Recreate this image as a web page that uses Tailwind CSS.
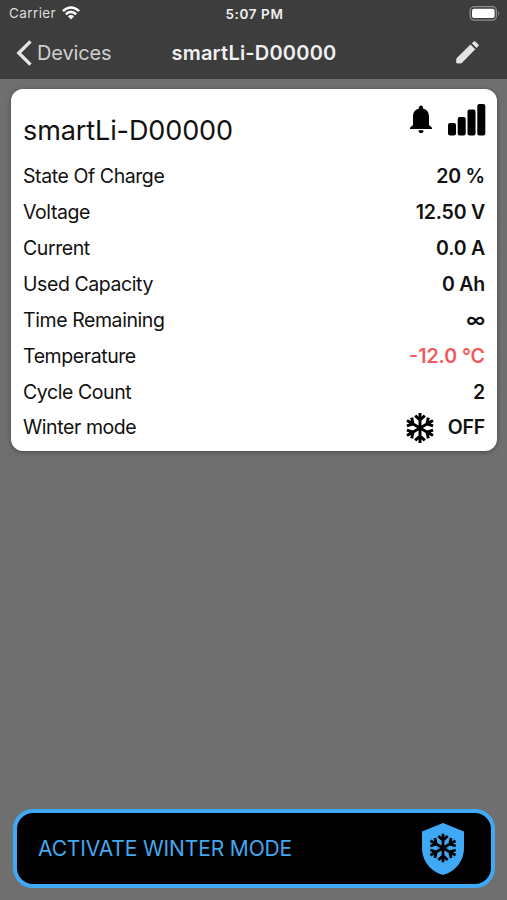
<!DOCTYPE html>
<html lang="en">
<head>
<meta charset="utf-8">
<title>smartLi-D00000</title>
<script src="https://cdn.jsdelivr.net/npm/@tailwindcss/browser@4"></script>
</head>
<body class="flex h-[900px] w-[507px] flex-col overflow-hidden bg-[#6f6f6f] font-['Inter','Liberation_Sans',sans-serif] text-[#111]">
<svg class="hidden">
  <symbol id="flake" viewBox="-15 -15 30 30">
    <g fill="none" stroke="#000" stroke-width="2.9">
      <g id="axis"><path d="M0-15V15M-4.800-12.400L0-8L4.800-12.400M-4.800 12.400L0 8L4.800 12.400"/></g>
      <use href="#axis" transform="rotate(60)"/>
      <use href="#axis" transform="rotate(120)"/>
    </g>
  </symbol>
</svg>
<header class="h-[79px] shrink-0 bg-[#3d3d3d] text-[#f0f0f0]">
  <div class="grid h-[28px] grid-cols-3 items-center pr-[7px] pl-[9px] text-[13.5px] leading-none">
    <div class="flex items-center gap-[6px] text-[#dcdcdc]"><span class="tracking-[0.4px]">Carrier</span>
      <svg class="mb-[2px] h-[14px] w-[18px]" viewBox="0 0 18 14" fill="none" stroke="#fff" stroke-width="2.5"><path d="M.9 5.2Q9-2.2 17.1 5.2M3.8 8.2Q9 3.6 14.2 8.2"/><path d="M5.9 10.3Q9 7.8 12.1 10.3L9 13.6Z" fill="#fff" stroke="none"/></svg>
    </div>
    <div class="pt-[1px] text-center font-semibold tracking-[0.6px] whitespace-nowrap">5:07 PM</div>
    <svg class="mb-[1px] h-[15px] w-[31px] justify-self-end" viewBox="0 0 31 15"><rect x="1.2" y=".7" width="26.2" height="13.4" rx="4" fill="none" stroke="#8d8d8d" stroke-width="1.3"/><rect x="3" y="2.7" width="22.6" height="9.4" rx="2" fill="#fff"/><path d="M29 5Q31 7.4 29 9.8Z" fill="#8d8d8d"/></svg>
  </div>
  <div class="grid h-[49px] grid-cols-[155.500px_1fr_60px] items-center pr-[27px] pl-[16px]">
    <div class="flex items-center gap-[5px] text-[20px] text-[#cfcfcf]">
      <svg class="h-[26px] w-[16px]" viewBox="0 0 16 26" fill="none" stroke="#e4e4e2" stroke-width="3.4"><path d="M14.5 1.4L2.8 13L14.5 24.6"/></svg>
      <span class="tracking-[-0.15px]">Devices</span>
    </div>
    <h1 class="text-[20px] font-semibold tracking-[0.2px]">smartLi-D00000</h1>
    <svg class="mr-px h-[23px] w-[23px] justify-self-end" viewBox="0 0 23 23" fill="#e4e4e2" stroke="#e4e4e2" stroke-width="1" stroke-linejoin="round"><path d="M.8 17.600L14.500 4L18.800 8.300L5.400 21.900H.8ZM16.300 2.300L17.600 1Q18.500.3 19.400 1L21.900 3.500Q22.700 4.400 21.900 5.300L20.600 6.500Z"/></svg>
  </div>
</header>
<main class="flex flex-1 flex-col pt-[10px] pr-[10px] pl-[11px]">
  <section class="h-[362px] rounded-[12px] bg-white px-[12px] shadow-[0_1px_5px_rgba(0,0,0,0.35)]">
    <div class="flex h-[70.2px] items-start justify-between">
      <h2 class="pt-[22px] text-[27px] leading-[40px] tracking-[-0.1px]">smartLi-D00000</h2>
      <div class="flex gap-[15px] pt-[15px]">
        <svg class="mt-[1px] h-[28px] w-[24px]" viewBox="0 0 24 28"><path d="M1 24V22.8L4 20V11.5C4 7 6.500 4.300 10 3.500V2.600A2 2 0 0 1 14 2.600V3.500C17.500 4.300 20 7 20 11.500V20L23 22.800V24ZM9.500 25.200H14.500Q14.500 28 12 28T9.500 25.200Z"/></svg>
        <svg class="-mr-[1px] h-[32px] w-[38px]" viewBox="0 0 38 32"><rect x="0" y="19" width="8" height="12.500" rx="2"/><rect x="9.700" y="13" width="8" height="18.500" rx="2"/><rect x="19.500" y="5.500" width="8" height="26" rx="2"/><rect x="29.300" y="0" width="8" height="31.500" rx="2"/></svg>
      </div>
    </div>
    <dl class="text-[19.5px] [&_dd]:font-semibold [&_dd]:tracking-[-0.2px] [&_dt]:tracking-[-0.42px] [&>div]:flex [&>div]:h-[35.85px] [&>div]:items-center [&>div]:justify-between">
      <div><dt>State Of Charge</dt><dd>20 %</dd></div>
      <div><dt>Voltage</dt><dd>12.50 V</dd></div>
      <div><dt>Current</dt><dd>0.0 A</dd></div>
      <div><dt>Used Capacity</dt><dd>0 Ah</dd></div>
      <div><dt>Time Remaining</dt><dd>∞</dd></div>
      <div><dt>Temperature</dt><dd><span class="tracking-normal text-[#f25a5a]">-12.0 °C</span></dd></div>
      <div><dt>Cycle Count</dt><dd>2</dd></div>
      <div><dt>Winter mode</dt><dd class="flex items-center gap-[13px]"><svg class="size-[30px]"><use href="#flake"/></svg>OFF</dd></div>
    </dl>
  </section>
  <button class="mt-auto mr-[2px] mb-[12px] ml-[2px] flex h-[79px] items-center justify-between rounded-[20px] border-[4px] border-[#3fa9f5] bg-black pr-[27px] pl-[21px] text-[21px] text-[#45a8ee]">
    <span class="tracking-[-0.13px]">ACTIVATE WINTER MODE</span>
    <svg class="h-[52px] w-[42px]" viewBox="0 0 42 52"><path d="M21 0L42 8.500V25C42 38 33 49 21 52C9 49 0 38 0 25V8.500Z" fill="#3fa9f5"/><use href="#flake" x="6.500" y="10.500" width="29" height="29"/></svg>
  </button>
</main>
</body>
</html>
